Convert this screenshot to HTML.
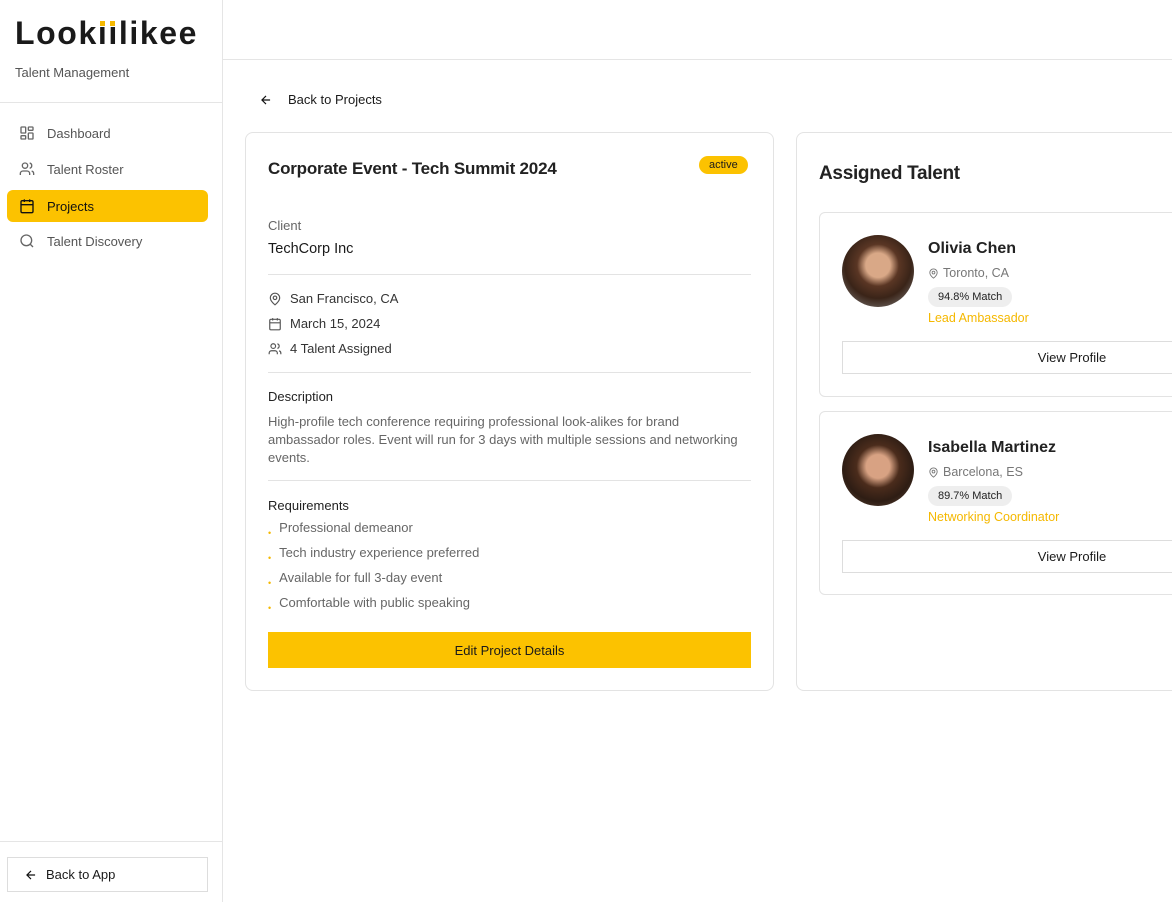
<!DOCTYPE html>
<html><head><meta charset="utf-8"><style>
*{box-sizing:border-box;margin:0;padding:0}
body{width:1172px;height:902px;overflow:hidden;background:#fff;font-family:"Liberation Sans",sans-serif;color:#1a1a1a;position:relative}
.side{position:absolute;left:0;top:0;width:223px;height:902px;border-right:1px solid #e5e5e5}
.logo{position:absolute;left:15px;top:15px;font-size:32px;font-weight:700;letter-spacing:1.6px;color:#1a1a1a}
.dot{position:relative;display:inline-block}
.dot:before{content:"";position:absolute;left:2px;top:6px;width:5px;height:5px;background:#f5b800}
.sub{position:absolute;left:15px;top:65px;font-size:13px;color:#555}
.hr1{position:absolute;left:0;top:102px;width:222px;border-top:1px solid #e5e5e5}
.nav{position:absolute;left:7px;width:201px;height:32px;border-radius:6px;font-size:13px;color:#555;display:flex;align-items:center;padding-left:12px}
.nav svg{margin-right:12px}
.nav.act{background:#fcc200;color:#111}
.hr2{position:absolute;left:0;top:841px;width:222px;border-top:1px solid #e5e5e5}
.back{position:absolute;left:7px;top:857px;width:201px;height:35px;border:1px solid #ddd;font-size:13px;display:flex;align-items:center;padding-left:16px}
.top{position:absolute;left:223px;top:0;right:0;height:60px;border-bottom:1px solid #e5e5e5}
.bp{position:absolute;left:259px;top:92px;font-size:13px;display:flex;align-items:center}
.card{position:absolute;border:1px solid #e3e3e3;border-radius:8px;background:#fff}
.lbl{font-size:13px;color:#666}
.row{position:absolute;left:22px;font-size:13px;display:flex;align-items:center;color:#333}
.row svg{margin-right:8px}
.line{position:absolute;left:22px;width:483px;border-top:1px solid #e3e3e3}
.req{position:absolute;left:22px;font-size:13px;color:#666}
.req:before{content:"•";color:#f5b800;font-size:9px;margin-right:8px;position:relative;top:4px}
.tc{position:absolute;left:22px;width:400px;border:1px solid #e3e3e3;border-radius:6px}
.av{position:absolute;left:22px;top:22px;width:72px;height:72px;border-radius:50%;background:radial-gradient(circle at 50% 42%,#d9a887 0 22%,#5a3624 38%,#3a2418 60%,#8a8a8a 100%)}
.nm{position:absolute;left:108px;top:27px;font-size:16px;font-weight:700;color:#222}
.loc{position:absolute;left:108px;top:53px;font-size:12.5px;color:#777;display:flex;align-items:center}
.m{position:absolute;left:108px;top:74px;background:#eee;border-radius:10px;font-size:11px;padding:4px 10px;color:#222}
.role{position:absolute;left:108px;top:98px;font-size:12.5px;color:#f5b800}
.vp{position:absolute;left:22px;top:128px;width:360px;height:33px;border:1px solid #ddd;font-size:13px;display:flex;align-items:center;justify-content:center;padding-left:100px}
</style></head><body>
<div class="side">
<div class="logo">Look<span class="dot">ı</span><span class="dot">ı</span>likee</div>
<div class="sub">Talent Management</div>
<div class="hr1"></div>
<div class="nav" style="top:117px"><svg width="16" height="16" viewBox="0 0 24 24" fill="none" stroke="#666" stroke-width="2"><rect x="3" y="3" width="7" height="9" rx="1"/><rect x="14" y="3" width="7" height="5" rx="1"/><rect x="14" y="12" width="7" height="9" rx="1"/><rect x="3" y="16" width="7" height="5" rx="1"/></svg>Dashboard</div>
<div class="nav" style="top:153px"><svg width="16" height="16" viewBox="0 0 24 24" fill="none" stroke="#666" stroke-width="2"><circle cx="9" cy="7" r="4"/><path d="M2 21v-2a4 4 0 0 1 4-4h6a4 4 0 0 1 4 4v2M16 3.1a4 4 0 0 1 0 7.8M22 21v-2a4 4 0 0 0-3-3.9"/></svg>Talent Roster</div>
<div class="nav act" style="top:190px"><svg width="16" height="16" viewBox="0 0 24 24" fill="none" stroke="#111" stroke-width="2"><rect x="3" y="4" width="18" height="18" rx="2"/><path d="M16 2v4M8 2v4M3 10h18"/></svg>Projects</div>
<div class="nav" style="top:225px"><svg width="16" height="16" viewBox="0 0 24 24" fill="none" stroke="#666" stroke-width="2"><circle cx="11" cy="11" r="8"/><path d="M21 21l-4.3-4.3"/></svg>Talent Discovery</div>
<div class="hr2"></div>
<div class="back"><svg width="14" height="14" viewBox="0 0 24 24" fill="none" stroke="#111" stroke-width="2" style="margin-right:8px"><path d="M19 12H5M12 19l-7-7 7-7"/></svg>Back to App</div>
</div>
<div class="top"></div>
<div class="bp"><svg width="14" height="14" viewBox="0 0 24 24" fill="none" stroke="#111" stroke-width="2" style="margin-right:15px"><path d="M19 12H5M12 19l-7-7 7-7"/></svg>Back to Projects</div>

<div class="card" style="left:245px;top:132px;width:529px;height:559px">
<div style="position:absolute;left:22px;top:26px;font-size:17px;font-weight:700;color:#222;letter-spacing:-0.2px">Corporate Event - Tech Summit 2024</div>
<div style="position:absolute;left:453px;top:23px;background:#fcc200;border-radius:10px;font-size:11px;padding:3px 10px">active</div>
<div class="lbl" style="position:absolute;left:22px;top:85px">Client</div>
<div style="position:absolute;left:22px;top:108px;font-size:14.5px">TechCorp Inc</div>
<div class="line" style="top:141px"></div>
<div class="row" style="top:158px"><svg width="14" height="14" viewBox="0 0 24 24" fill="none" stroke="#555" stroke-width="2"><path d="M20 10c0 6-8 12-8 12s-8-6-8-12a8 8 0 0 1 16 0z"/><circle cx="12" cy="10" r="3"/></svg>San Francisco, CA</div>
<div class="row" style="top:183px"><svg width="14" height="14" viewBox="0 0 24 24" fill="none" stroke="#555" stroke-width="2"><rect x="3" y="4" width="18" height="18" rx="2"/><path d="M16 2v4M8 2v4M3 10h18"/></svg>March 15, 2024</div>
<div class="row" style="top:208px"><svg width="14" height="14" viewBox="0 0 24 24" fill="none" stroke="#555" stroke-width="2"><circle cx="9" cy="7" r="4"/><path d="M2 21v-2a4 4 0 0 1 4-4h6a4 4 0 0 1 4 4v2M16 3.1a4 4 0 0 1 0 7.8M22 21v-2a4 4 0 0 0-3-3.9"/></svg>4 Talent Assigned</div>
<div class="line" style="top:239px"></div>
<div style="position:absolute;left:22px;top:256px;font-size:13px;color:#222">Description</div>
<div style="position:absolute;left:22px;top:280px;width:480px;font-size:13px;line-height:18px;color:#666">High-profile tech conference requiring professional look-alikes for brand ambassador roles. Event will run for 3 days with multiple sessions and networking events.</div>
<div class="line" style="top:347px"></div>
<div style="position:absolute;left:22px;top:365px;font-size:13px;color:#222">Requirements</div>
<div class="req" style="top:387px">Professional demeanor</div>
<div class="req" style="top:412px">Tech industry experience preferred</div>
<div class="req" style="top:437px">Available for full 3-day event</div>
<div class="req" style="top:462px">Comfortable with public speaking</div>
<div style="position:absolute;left:22px;top:499px;width:483px;height:36px;background:#fcc200;font-size:13px;display:flex;align-items:center;justify-content:center">Edit Project Details</div>
</div>

<div class="card" style="left:796px;top:132px;width:420px;height:559px">
<div style="position:absolute;left:22px;top:30px;font-size:19px;font-weight:700;color:#222;letter-spacing:-0.3px">Assigned Talent</div>
<div class="tc" style="top:79px;height:185px">
<div class="av"></div><div class="nm">Olivia Chen</div>
<div class="loc"><svg width="11" height="11" viewBox="0 0 24 24" fill="none" stroke="#777" stroke-width="2" style="margin-right:4px"><path d="M20 10c0 6-8 12-8 12s-8-6-8-12a8 8 0 0 1 16 0z"/><circle cx="12" cy="10" r="3"/></svg>Toronto, CA</div>
<div class="m">94.8% Match</div><div class="role">Lead Ambassador</div>
<div class="vp">View Profile</div></div>
<div class="tc" style="top:278px;height:184px">
<div class="av" style="background:radial-gradient(circle at 50% 45%,#d8a283 0 22%,#4b2c1c 40%,#2e1d14 65%,#6b5040 100%)"></div><div class="nm">Isabella Martinez</div>
<div class="loc"><svg width="11" height="11" viewBox="0 0 24 24" fill="none" stroke="#777" stroke-width="2" style="margin-right:4px"><path d="M20 10c0 6-8 12-8 12s-8-6-8-12a8 8 0 0 1 16 0z"/><circle cx="12" cy="10" r="3"/></svg>Barcelona, ES</div>
<div class="m">89.7% Match</div><div class="role">Networking Coordinator</div>
<div class="vp">View Profile</div></div>
</div>
</body></html>
